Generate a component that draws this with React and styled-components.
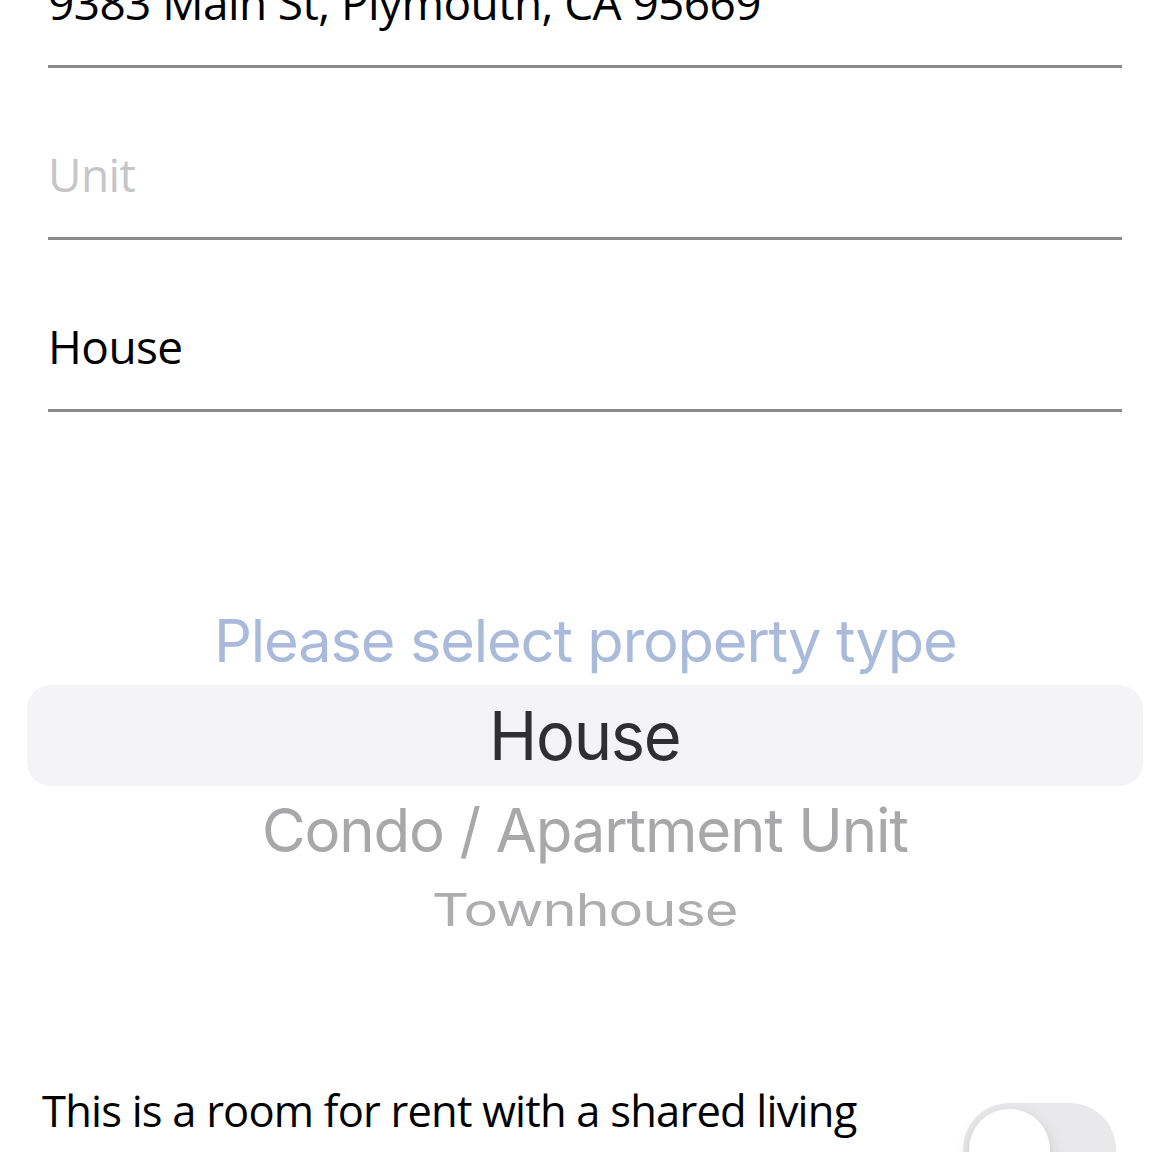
import React from 'react'
import styled, { createGlobalStyle } from 'styled-components'

const GlobalStyle = createGlobalStyle`
  html, body {
    margin: 0;
    padding: 0;
    background: #fff;
  }
  body {
    font-family: 'Open Sans', 'Noto Sans', sans-serif;
    -webkit-font-smoothing: antialiased;
  }
  #root {
    height: 1152px;
    overflow: hidden;
  }
`

const Screen = styled.div`
  width: 1170px;
  height: 1152px;
  overflow: hidden;
  background: #fff;
`

// the view is scrolled, the first field sits partly above the top edge
const Form = styled.div`
  margin-top: -104px;
  padding: 0 48px;
  display: flex;
  flex-direction: column;
`

const Field = styled.div`
  height: 172px;
  display: flex;
  align-items: flex-end;
  padding: 0 1px 35px 0;
  box-sizing: border-box;
  border-bottom: 3px solid #8a8a8a;
`

const FieldText = styled.div`
  font-family: 'Open Sans', sans-serif;
  font-size: 46px;
  line-height: 56px;
  letter-spacing: -0.6px;
  color: ${ props => props.placeholder ? '#c6c6c8' : '#000' };
  white-space: nowrap;
`

const Picker = styled.div`
  padding: 178px 27px 0;
  display: flex;
  flex-direction: column;
`

const PickerRow = styled.div`
  height: ${ props => props.h }px;
  display: flex;
  align-items: center;
  justify-content: center;
  border-radius: 24px;
  background: ${ props => props.selected ? '#f4f4f6' : 'transparent' };
`

const PickerLabel = styled.span`
  font-family: Inter, 'Liberation Sans', sans-serif;
  font-size: 67px;
  line-height: 1;
  letter-spacing: -0.02em;
  color: ${ props => props.color };
  white-space: nowrap;
  transform: translateY(${ props => props.dy || 0 }px) scale(${ props => props.sx || 1 }, ${ props => props.sy || 1 });
  transform-origin: center;
`

const ToggleRow = styled.div`
  margin-top: 137px;
  padding: 0 54px 0 42px;
  display: flex;
  align-items: flex-start;
  justify-content: space-between;
`

const ToggleText = styled.div`
  font-family: 'Open Sans', sans-serif;
  font-size: 43.5px;
  line-height: 56px;
  letter-spacing: -0.8px;
  color: #000;
  max-width: 880px;
`

const Switch = styled.div`
  margin-top: 20px;
  flex-shrink: 0;
  width: 153px;
  height: 93px;
  border-radius: 47px;
  background: #e9e9eb;
  position: relative;
  &::after {
    content: "";
    position: absolute;
    top: 6px;
    left: 6px;
    width: 81px;
    height: 81px;
    border-radius: 50%;
    background: #fff;
    box-shadow: 0 6px 16px rgba(0,0,0,0.15), 0 3px 3px rgba(0,0,0,0.06);
  }
`

const options = [
  { label: 'Please select property type', color: '#a9badb', h: 95, dy: 3, sx: 0.89, sy: 0.88 },
  { label: 'House', color: '#2f2f31', h: 101, sx: 0.97, selected: true },
  { label: 'Condo / Apartment Unit', color: '#a8a8aa', h: 90, dy: -2, sx: 0.895, sy: 0.9 },
  { label: 'Townhouse', color: '#aeaeb0', h: 70, dy: -2, sx: 0.865, sy: 0.67 },
]

export default function App() {
  return (
    <Screen>
      <GlobalStyle />
      <Form>
        <Field><FieldText>9383 Main St, Plymouth, CA 95669</FieldText></Field>
        <Field><FieldText placeholder>Unit</FieldText></Field>
        <Field><FieldText>House</FieldText></Field>
      </Form>
      <Picker>
        { options.map( o =>
          <PickerRow key={ o.label } h={ o.h } selected={ o.selected }>
            <PickerLabel color={ o.color } dy={ o.dy } sx={ o.sx } sy={ o.sy }>{ o.label }</PickerLabel>
          </PickerRow>
        )}
      </Picker>
      <ToggleRow>
        <ToggleText>This is a room for rent with a shared living space</ToggleText>
        <Switch />
      </ToggleRow>
    </Screen>
  )
}
